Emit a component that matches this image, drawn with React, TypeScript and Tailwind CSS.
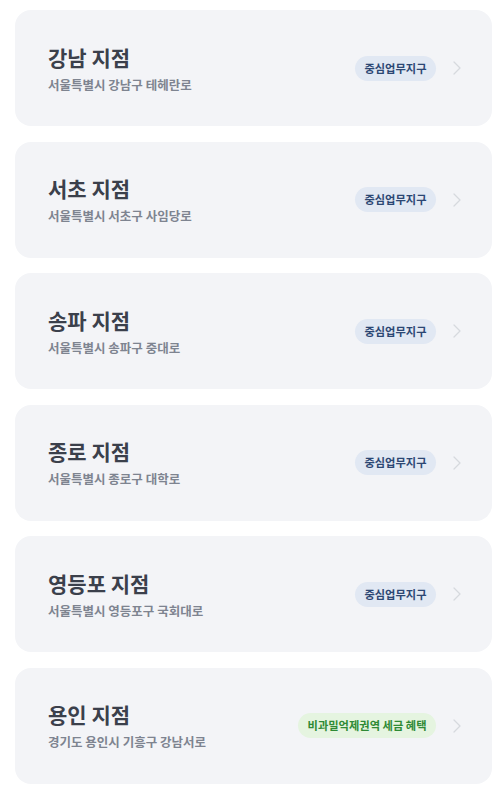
import { ChevronRight } from "lucide-react";

type Branch = {
  name: string;
  address: string;
  tag: string;
  green?: boolean;
};

const branches: Branch[] = [
  { name: "강남 지점", address: "서울특별시 강남구 테헤란로", tag: "중심업무지구" },
  { name: "서초 지점", address: "서울특별시 서초구 사임당로", tag: "중심업무지구" },
  { name: "송파 지점", address: "서울특별시 송파구 중대로", tag: "중심업무지구" },
  { name: "종로 지점", address: "서울특별시 종로구 대학로", tag: "중심업무지구" },
  { name: "영등포 지점", address: "서울특별시 영등포구 국회대로", tag: "중심업무지구" },
  {
    name: "용인 지점",
    address: "경기도 용인시 기흥구 강남서로",
    tag: "비과밀억제권역 세금 혜택",
    green: true,
  },
];

const BranchCard = ({ branch }: { branch: Branch }) => {
  return (
    <div className="flex h-[116px] items-center rounded-2xl bg-[#f3f4f7] pl-[33px] pr-[23px]">
      <div className="flex flex-1 flex-col">
        <p className="text-[21px] font-bold leading-[28px] text-[#3b404b]">
          {branch.name}
        </p>
        <p className="mt-[5px] text-[12.5px] font-semibold leading-[18px] text-[#7e8490]">
          {branch.address}
        </p>
      </div>
      <span
        className={`${
          branch.green
            ? "bg-[#e5f4e0] text-[#2f8a35]"
            : "bg-[#e1e8f3] text-[#2c4773]"
        } rounded-full px-[9.5px] py-[4px] text-[11.25px] font-bold leading-[17px]`}
      >
        {branch.tag}
      </span>
      <ChevronRight
        className="ml-[9px] text-[#d6d9de]"
        size={24}
        strokeWidth={1.25}
      />
    </div>
  );
};

const App = () => {
  return (
    <div
      className="flex flex-col gap-[15.5px] bg-white pb-[15px] pl-[15px] pr-[10px] pt-[10px]"
      style={{ fontFamily: '"Noto Sans CJK KR", "Noto Sans", sans-serif' }}
    >
      {branches.map((b) => (
        <BranchCard key={b.name} branch={b} />
      ))}
    </div>
  );
};

export default App;
